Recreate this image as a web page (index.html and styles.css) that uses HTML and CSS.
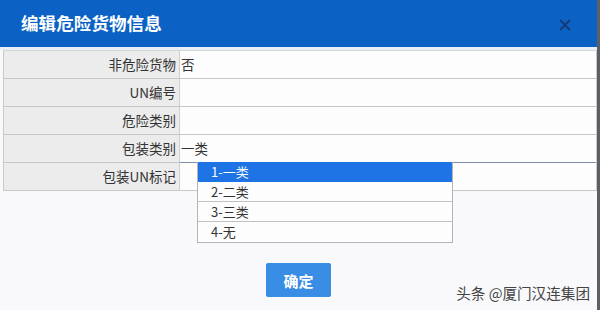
FILE: index.html
```html
<!DOCTYPE html>
<html lang="zh">
<head>
<meta charset="utf-8">
<link rel="stylesheet" href="styles.css">
</head>
<body>
<div class="dialog">
  <div class="header">
    <div class="title">编辑危险货物信息</div>
    <svg class="close" width="12" height="12" viewBox="0 0 12 12"><path d="M1 1L11 11M11 1L1 11" stroke="#163a74" stroke-width="1.8" fill="none"/></svg>
  </div>
  <div class="sep"></div>
  <div class="form">
    <div class="row"><div class="label">非危险货物</div><div class="value">否</div></div>
    <div class="row"><div class="label">UN编号</div><div class="value"></div></div>
    <div class="row"><div class="label">危险类别</div><div class="value"></div></div>
    <div class="row"><div class="label">包装类别</div><div class="value select">一类</div></div>
    <div class="row last"><div class="label">包装UN标记</div><div class="value"></div></div>
  </div>
  <div class="actions"><button class="ok">确定</button></div>
  <ul class="dropdown">
    <li class="active">1-一类</li>
    <li>2-二类</li>
    <li>3-三类</li>
    <li>4-无</li>
  </ul>
  <div class="watermark">头条 @厦门汉连集团</div>
</div>
</body>
</html>
```

FILE: styles.css
```css
* { box-sizing: border-box; }
body {
  margin: 0;
  background: #f9f9fb;
  font-family: "Noto Sans CJK SC", "Liberation Sans", sans-serif;
}
.dialog {
  position: relative;
  width: 600px;
  height: 310px;
  background: #f9f9fb;
  border-right: 3px solid #5c5f66;
}
.header {
  height: 47px;
  background: #0c62c4;
  display: flex;
  align-items: center;
  justify-content: space-between;
  padding: 0 26px 0 21px;
}
.title {
  color: #fff;
  font-size: 17.5px;
  font-weight: bold;
  letter-spacing: 0.1px;
  margin-top: -2px;
}
.close { margin-top: 2px; }
.sep {
  height: 3px;
  background: #e9eef6;
}
.form {
  margin-left: 3px;
  width: 594px;
  border: 1px solid #c9c9c9;
  border-top-color: #d5d5d5;
}
.row {
  display: grid;
  grid-template-columns: 176px 1fr;
  height: 28px;
  border-bottom: 1px solid #c6c6c6;
}
.row.last { border-bottom: none; height: 27px; }
.label {
  background: #ececec;
  border-right: 1px solid #cfcfcf;
  text-align: right;
  padding-right: 3px;
  font-size: 13.5px;
  color: #333;
  line-height: 27px;
}
.value {
  background: #fdfdfd;
  font-size: 13.5px;
  color: #333;
  line-height: 27px;
  padding-left: 1px;
}
.value.select {
  border-bottom: 1px solid #7d8ea6;
  margin-bottom: -1px;
}
.actions {
  display: flex;
  justify-content: center;
  margin-top: 72px;
}
.ok {
  width: 65px;
  height: 34px;
  border: none;
  border-radius: 2px;
  background: #3a8de4;
  color: #fff;
  font-family: inherit;
  font-size: 15px;
  font-weight: bold;
  padding: 0;
}
.dropdown {
  position: absolute;
  left: 197px;
  top: 162px;
  width: 256px;
  margin: 0;
  padding: 0;
  list-style: none;
  background: #fdfdfd;
  border: 1px solid #b4b4b4;
  border-top: none;
}
.dropdown li {
  height: 20px;
  line-height: 19px;
  padding-left: 13px;
  font-size: 13px;
  color: #333;
  border-bottom: 1px solid #c2c2c2;
}
.dropdown li:last-child { border-bottom: none; }
.dropdown li.active {
  background: #1e74e4;
  color: #fff;
  border-bottom: none;
}
.watermark {
  position: absolute;
  right: 7px;
  bottom: 7px;
  font-size: 14.6px;
  color: #444;
}
```
